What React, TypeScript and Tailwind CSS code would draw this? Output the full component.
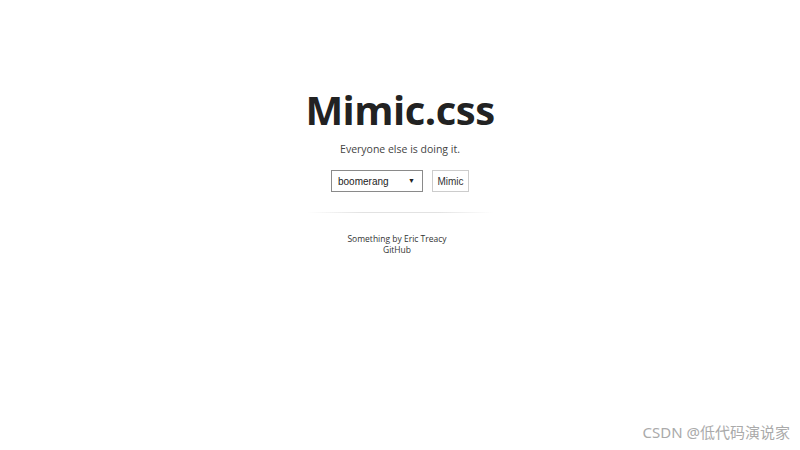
import React from 'react';

export default function App() {
  return (
    <div className="relative w-[800px] h-[450px] bg-white overflow-hidden font-['Open_Sans',sans-serif] text-[#222]">
      <div className="flex flex-col items-center pt-[82px]">
        <h1 className="text-[40px] leading-[56px] font-bold tracking-[-0.5px] text-[#222]">Mimic.css</h1>
        <p className="mt-[3px] text-[10.5px] leading-[16px] text-[#444]">Everyone else is doing it.</p>

        <div className="mt-[13px] flex items-center gap-[9px] font-['Liberation_Sans',sans-serif]">
          <div className="relative w-[92px] h-[22px] border border-[#8a8a8a] bg-white flex items-center px-[6px] text-[10px] text-[#222]">
            <span>boomerang</span>
            <span className="absolute right-[7px] top-[5px] text-[7px]">▼</span>
          </div>
          <button className="h-[22px] w-[37px] border border-[#ccc] bg-white text-[10px] text-[#333]">Mimic</button>
        </div>

        <div className="mt-[20px] h-px w-[186px] bg-[linear-gradient(90deg,transparent,#e2e2e2_30%,#e2e2e2_70%,transparent)]" />

        <div className="mt-[20px] mr-[6px] flex flex-col items-center text-[8.5px] leading-[11px] text-[#333]">
          <span>Something by Eric Treacy</span>
          <span>GitHub</span>
        </div>
      </div>

      <div className="absolute right-[10px] bottom-[7px] text-[15px] text-[#aaa] font-['Noto_Sans','Noto_Sans_CJK_SC',sans-serif]">
        CSDN @低代码演说家
      </div>
    </div>
  );
}
